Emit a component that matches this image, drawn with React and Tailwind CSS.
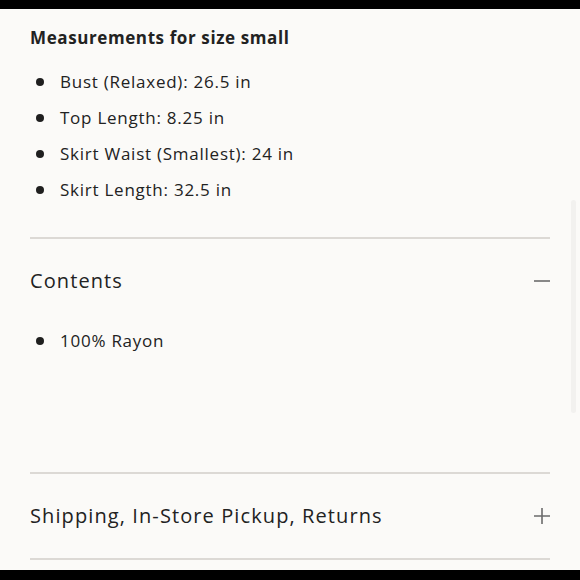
import React from "react";

const measurements = [
  "Bust (Relaxed): 26.5 in",
  "Top Length: 8.25 in",
  "Skirt Waist (Smallest): 24 in",
  "Skirt Length: 32.5 in",
];

function Bullet({ children }) {
  return (
    <li className="flex items-center h-[36px]">
      <span className="w-[8px] h-[8px] rounded-full bg-[#1f1f1f] ml-[6px] mr-[16px]" />
      <span>{children}</span>
    </li>
  );
}

function Minus() {
  return (
    <svg width="16" height="16" viewBox="0 0 16 16" className="shrink-0">
      <path d="M0 8h16" stroke="#6b6b6b" strokeWidth="1.6" />
    </svg>
  );
}

function Plus() {
  return (
    <svg width="16" height="16" viewBox="0 0 16 16" className="shrink-0">
      <path d="M0 8h16M8 0v16" stroke="#6b6b6b" strokeWidth="1.6" />
    </svg>
  );
}

export default function App() {
  return (
    <div
      className="relative w-[580px] h-[580px] bg-[#fbfaf8] text-[#222] overflow-hidden flex flex-col"
      style={{ fontFamily: '"Open Sans", "Liberation Sans", sans-serif' }}
    >
      <div className="h-[9px] bg-black shrink-0" />

      <div className="px-[30px] flex-1 flex flex-col">
        {/* Measurements */}
        <h4 className="mt-[19px] text-[17px] font-bold leading-[20px] tracking-[0.6px]">
          Measurements for size small
        </h4>
        <ul className="mt-[16px] text-[17px] tracking-[0.75px]">
          {measurements.map((m) => (
            <Bullet key={m}>{m}</Bullet>
          ))}
        </ul>

        <div className="mt-[29px] border-t-2 border-[#dcd9d5]" />

        {/* Contents */}
        <div className="flex items-center justify-between h-[84px]">
          <span className="text-[20px] tracking-[1.1px]">Contents</span>
          <Minus />
        </div>
        <ul className="text-[17px] tracking-[0.75px]">
          <Bullet>100% Rayon</Bullet>
        </ul>

        <div className="mt-[113px] border-t-2 border-[#dcd9d5]" />

        {/* Shipping */}
        <div className="flex items-center justify-between h-[84px]">
          <span className="text-[20px] tracking-[1.1px]">Shipping, In-Store Pickup, Returns</span>
          <Plus />
        </div>
        <div className="border-t-2 border-[#dcd9d5]" />
      </div>

      <div className="h-[10px] bg-black shrink-0" />

      {/* faint scrollbar track */}
      <div className="absolute right-[4px] top-[200px] w-[5px] h-[213px] bg-[#f2f1ef] rounded-sm" />
    </div>
  );
}
